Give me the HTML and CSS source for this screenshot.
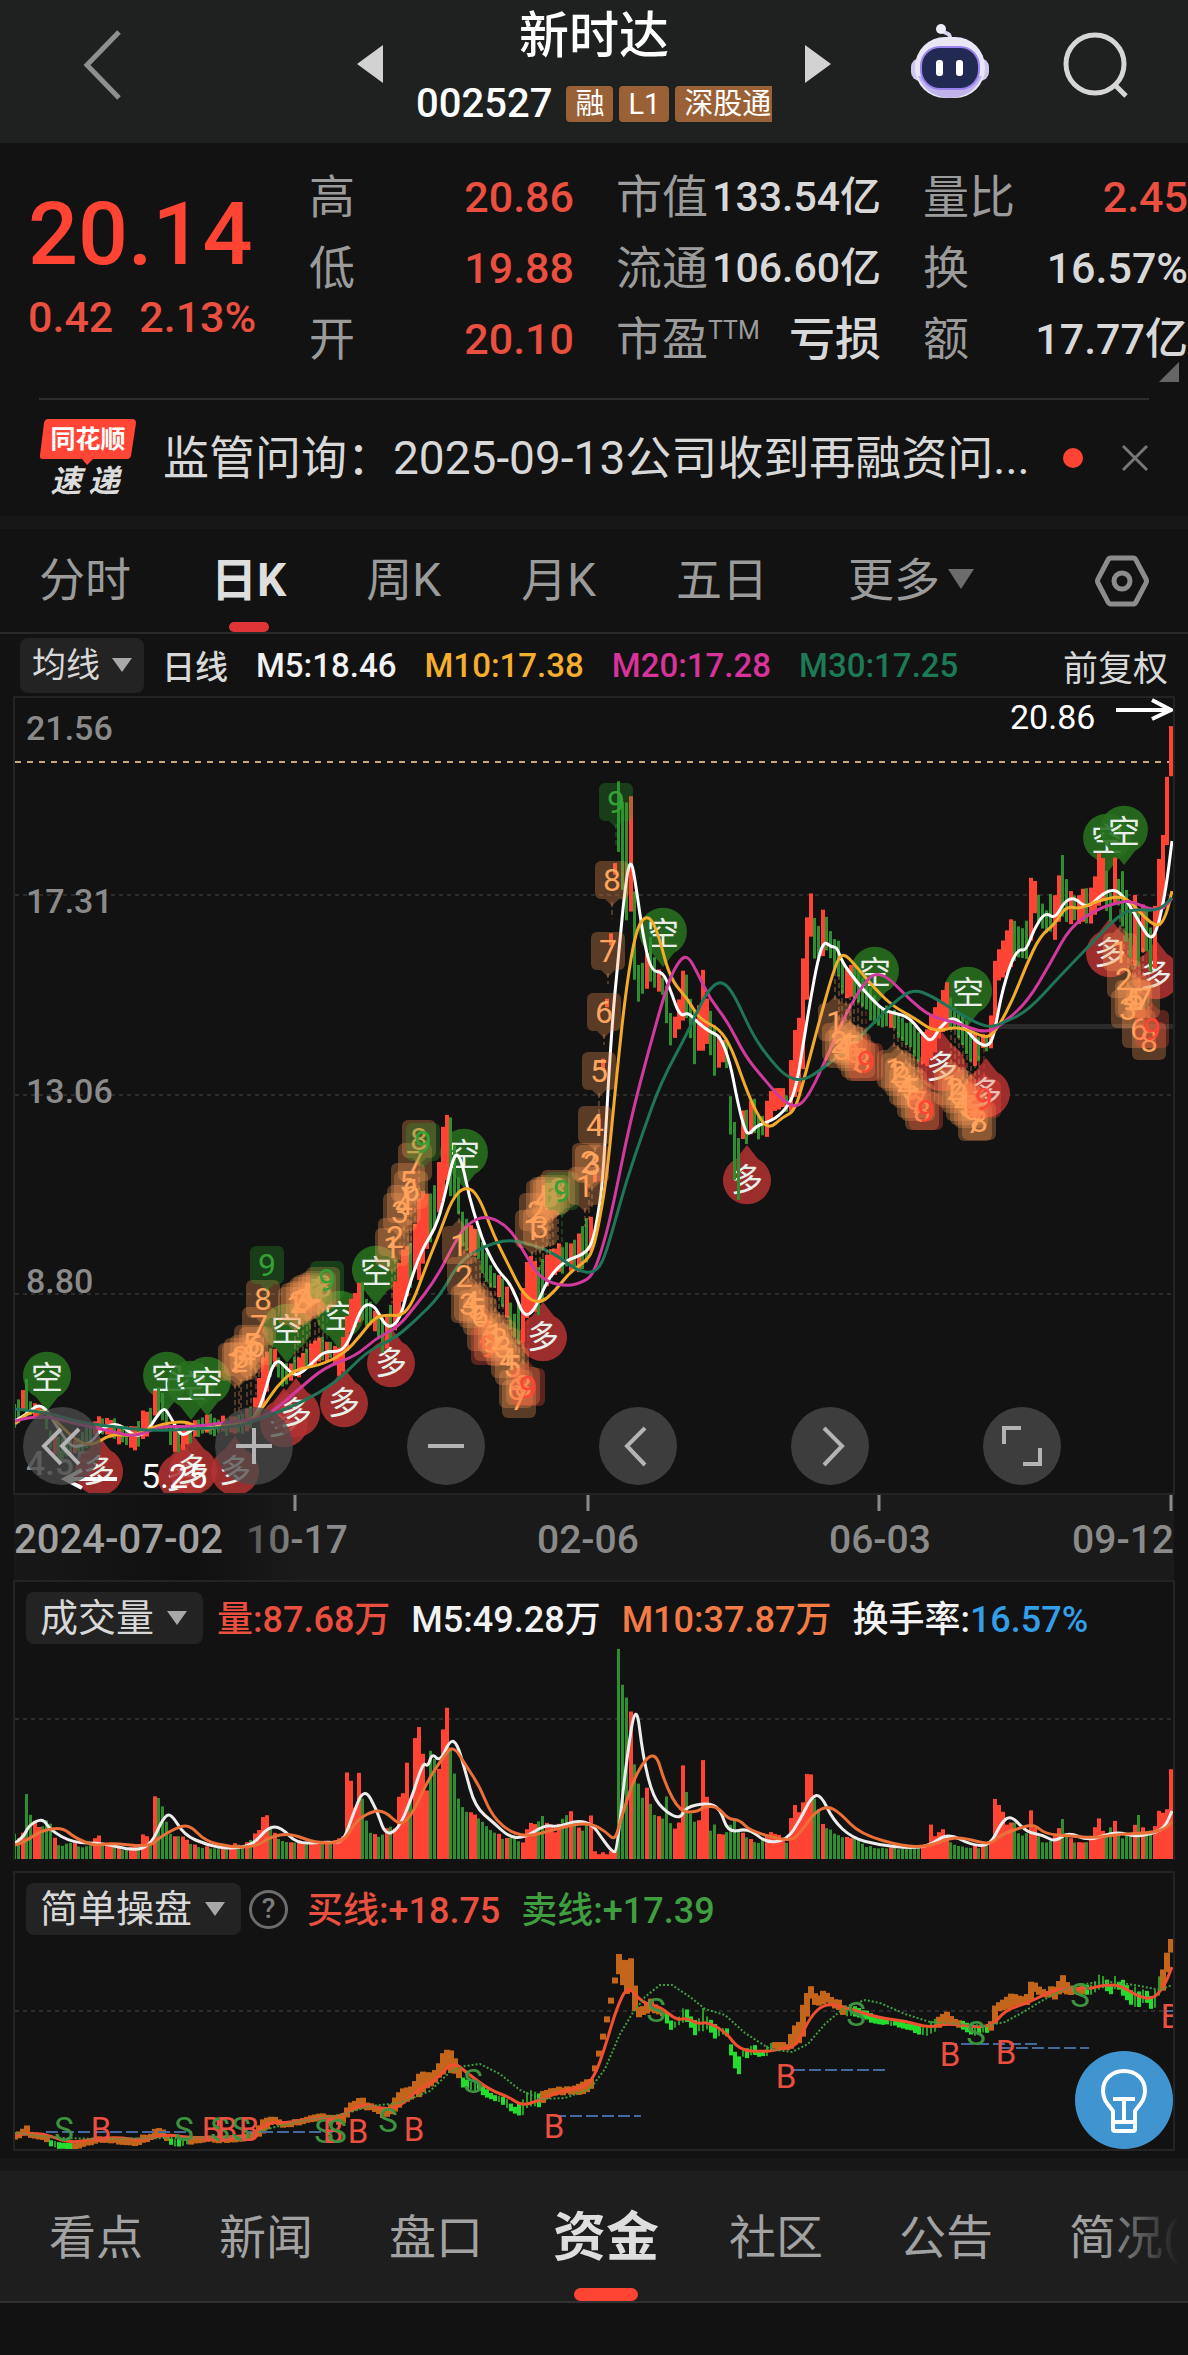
FILE: index.html
```html
<!DOCTYPE html>
<html lang="zh-CN">
<head>
    <meta charset="UTF-8">
    <meta name="viewport" content="width=device-width, initial-scale=1.0">
    <title>新时达 002527</title>
    <link rel="stylesheet" href="styles.css">
</head>
<body>
    <header class="topbar">
        <button class="icon-btn back" aria-label="返回">
            <svg width="40" height="72" viewBox="0 0 40 72"><path d="M36 3 L4 36 L36 69" fill="none" stroke="#8e9090" stroke-width="5"/></svg>
        </button>
        <div class="stock">
            <button class="icon-btn" aria-label="上一只"><svg width="26" height="40" viewBox="0 0 26 40"><path d="M26 1 V39 L0 20 Z" fill="#d2d2d2"/></svg></button>
            <div class="stock-name">
                <h1>新时达</h1>
                <div class="stock-code">
                    <span class="code">002527</span>
                    <span class="tag">融</span>
                    <span class="tag">L1</span>
                    <span class="tag tag-cut">深股通</span>
                </div>
            </div>
            <button class="icon-btn" aria-label="下一只"><svg width="26" height="40" viewBox="0 0 26 40"><path d="M0 1 V39 L26 20 Z" fill="#d2d2d2"/></svg></button>
        </div>
        <div class="tools">
            <button class="icon-btn" aria-label="智能助手">
                <svg width="80" height="76" viewBox="0 0 80 76">
                    <path d="M40 16 C41 8 36 10 32 7" fill="none" stroke="#d9d3f0" stroke-width="4"/>
                    <circle cx="31" cy="5" r="5" fill="#efecfa"/>
                    <rect x="1" y="34" width="78" height="23" rx="9" fill="#cfc8ee"/>
                    <rect x="5" y="13" width="70" height="61" rx="30" fill="#e9e6f8"/>
                    <path d="M8 52 Q16 73 40 74 Q64 73 72 52 Z" fill="#c0b4ea"/>
                    <rect x="10" y="22" width="60" height="44" rx="20" fill="#9a83ee"/>
                    <rect x="12" y="24" width="56" height="40" rx="18" fill="#202a52"/>
                    <rect x="26" y="36" width="7" height="16" rx="3" fill="#fff"/>
                    <rect x="46" y="36" width="7" height="16" rx="3" fill="#fff"/>
                </svg>
            </button>
            <button class="icon-btn" aria-label="搜索">
                <svg width="68" height="68" viewBox="0 0 68 68" fill="none" stroke="#d6d6d6" stroke-width="5"><circle cx="33" cy="33" r="29"/><path d="M53 54 L64 65"/></svg>
            </button>
        </div>
    </header>

    <section class="quote">
        <div class="price">
            <strong>20.14</strong>
            <p><span>0.42</span><span>2.13%</span></p>
        </div>
        <dl>
            <div><dt>高</dt><dd class="up">20.86</dd></div>
            <div><dt>低</dt><dd class="up">19.88</dd></div>
            <div><dt>开</dt><dd class="up">20.10</dd></div>
        </dl>
        <dl class="value">
            <div><dt>市值</dt><dd>133.54亿</dd></div>
            <div><dt>流通</dt><dd>106.60亿</dd></div>
            <div><dt>市盈<sup>TTM</sup></dt><dd class="loss">亏损</dd></div>
        </dl>
        <dl>
            <div><dt>量比</dt><dd class="up">2.45</dd></div>
            <div><dt>换</dt><dd>16.57%</dd></div>
            <div><dt>额</dt><dd>17.77亿</dd></div>
        </dl>
        <span class="corner"></span>
    </section>

    <section class="news">
        <svg class="news-logo" width="98" height="78" viewBox="0 0 98 78">
            <path d="M9 0 H93 Q97 0 97 4 L92 37 Q91 40 88 40 H54 L48 46 L43 40 H4 Q0 40 1 36 L5 4 Q6 0 9 0 Z" fill="#ff4636"/>
            <text x="49" y="29" class="logo-a">同花顺</text>
            <text x="46" y="73" class="logo-b">速 递</text>
        </svg>
        <a href="#" class="news-text">监管问询：2025-09-13公司收到再融资问...</a>
        <span class="dot"></span>
        <button class="icon-btn" aria-label="关闭"><svg width="28" height="28" viewBox="0 0 28 28"><path d="M2 2 L26 26 M26 2 L2 26" stroke="#777" stroke-width="3"/></svg></button>
    </section>

    <nav class="periods">
        <a href="#">分时</a>
        <a href="#" class="active">日K</a>
        <a href="#">周K</a>
        <a href="#">月K</a>
        <a href="#">五日</a>
        <button class="more">更多<i></i></button>
        <button class="icon-btn settings" aria-label="设置">
            <svg width="54" height="52" viewBox="0 0 54 52" fill="none" stroke="#8c8c8c" stroke-width="5"><path d="M16 3 H38 Q40 3 41 5 L51 24 Q52 26 51 28 L41 47 Q40 49 38 49 H16 Q14 49 13 47 L3 28 Q2 26 3 24 L13 5 Q14 3 16 3 Z"/><circle cx="27" cy="26" r="8"/></svg>
        </button>
    </nav>

    <div class="ma-bar">
        <label class="chip small"><select aria-label="主图指标"><option>均线</option></select></label>
        <span class="kind">日线</span>
        <span class="m5">M5:18.46</span>
        <span class="m10">M10:17.38</span>
        <span class="m20">M20:17.28</span>
        <span class="m30">M30:17.25</span>
        <span class="adjust">前复权</span>
    </div>

    <section class="panel main-chart">
        <svg id="kline" viewBox="15 2 1158 795"></svg>
        <div class="controls">
            <button aria-label="最早"><svg viewBox="0 0 78 78"><path d="M38 22 L21 39 L38 57 M56 22 L39 39 L56 57"/></svg></button>
            <button aria-label="放大"><svg viewBox="0 0 78 78"><path d="M21 39 H57 M39 21 V57"/></svg></button>
            <button aria-label="缩小"><svg viewBox="0 0 78 78"><path d="M21 39 H57"/></svg></button>
            <button aria-label="左移"><svg viewBox="0 0 78 78"><path d="M46 21 L28 39 L46 58"/></svg></button>
            <button aria-label="右移"><svg viewBox="0 0 78 78"><path d="M33 21 L51 39 L33 58"/></svg></button>
            <button aria-label="全屏"><svg viewBox="0 0 78 78"><path d="M21 37 V21 H38 M57 41 V57 H40"/></svg></button>
        </div>
    </section>

    <svg class="axis" viewBox="14 0 1160 85">
        <defs>
            <linearGradient id="fade"><stop offset="0" stop-color="#101010" stop-opacity="0.2"/><stop offset="0.6" stop-color="#101010"/><stop offset="1" stop-color="#101010" stop-opacity="0"/></linearGradient>
        </defs>
        <text x="297" y="58" text-anchor="middle">10-17</text>
        <rect x="14" y="0" width="285" height="85" fill="url(#fade)"/>
        <path d="M295 0 V16 M588 0 V16 M879 0 V16 M1171 0 V16" stroke="#8a8a8a" stroke-width="3"/>
        <text x="14" y="58" class="start">2024-07-02</text>
        <text x="588" y="58" text-anchor="middle">02-06</text>
        <text x="880" y="58" text-anchor="middle">06-03</text>
        <text x="1174" y="58" text-anchor="end">09-12</text>
    </svg>

    <section class="panel volume">
        <div class="panel-head">
            <label class="chip"><select aria-label="副图指标一"><option>成交量</option></select></label>
            <span class="up">量:87.68万</span>
            <span class="m5">M5:49.28万</span>
            <span class="vol10">M10:37.87万</span>
            <span class="m5">换手率:<b>16.57%</b></span>
        </div>
        <svg id="volume" viewBox="15 1 1158 212"></svg>
    </section>

    <section class="panel trade">
        <div class="panel-head">
            <label class="chip"><select aria-label="副图指标二"><option>简单操盘</option></select></label>
            <button class="help" aria-label="说明">?</button>
            <span class="up">买线:+18.75</span>
            <span class="down">卖线:+17.39</span>
        </div>
        <svg id="trade" viewBox="15 0 1158 210"></svg>
        <button class="bulb" aria-label="提示">
            <svg width="98" height="98" viewBox="0 0 98 98" fill="none" stroke="#fff" stroke-width="4" stroke-linejoin="round">
                <path d="M38 78 V60 C34 54 28 50 28 40 C28 28 37 20 49 20 C61 20 70 28 70 40 C70 50 64 54 60 60 V78 Q60 80 58 80 H40 Q38 80 38 78 Z M38 71 H60 M49 48 V70 M38 48 H60"/>
            </svg>
        </button>
    </section>

    <nav class="bottom-tabs">
        <a href="#">看点</a>
        <a href="#">新闻</a>
        <a href="#">盘口</a>
        <a href="#" class="active">资金</a>
        <a href="#">社区</a>
        <a href="#">公告</a>
        <a href="#">简况(F10)</a>
    </nav>
    <script src="script.js"></script>
</body>
</html>
```
FILE: styles.css
```css
* {
    box-sizing: border-box;
}

body {
    margin: 0;
    background-color: #121212;
    color: #d8d8d8;
    font-family: Roboto, "Noto Sans CJK SC", sans-serif;
    overflow-x: hidden;
}

a {
    color: inherit;
    text-decoration: none;
}

button,
select {
    font: inherit;
    color: inherit;
    background: none;
    border: none;
    padding: 0;
    margin: 0;
}

svg {
    display: block;
}

.icon-btn {
    flex: none;
}

.up {
    color: #ea4f3f;
}

.down {
    color: #3f9f40;
}

/* top bar */
.topbar {
    display: grid;
    grid-template-columns: 1fr auto 1fr;
    align-items: start;
    height: 143px;
    padding: 0 58px;
    background-color: #1e2120;
}

.back {
    justify-self: start;
    margin: 29px 0 0 25px;
}

.stock {
    display: flex;
    gap: 33px;
}

.stock .icon-btn {
    align-self: start;
    margin-top: 44px;
}

.stock-name {
    width: 356px;
    color: #fff;
    text-align: center;
}

.stock-name h1 {
    margin: 6px 0 0;
    font-size: 50px;
    line-height: 60px;
    font-weight: 500;
}

.stock-code {
    display: flex;
    gap: 6px;
    margin-top: 20px;
    height: 36px;
    line-height: 36px;
}

.code {
    margin-right: 8px;
    font-size: 40px;
    font-weight: 500;
}

.tag {
    padding: 0 9px;
    border-radius: 4px;
    background-color: #9b6136;
    font-size: 29px;
}

.tag-cut {
    flex: 1;
    padding: 0 0 0 9px;
    border-radius: 4px 0 0 4px;
    text-align: left;
    white-space: nowrap;
    overflow: hidden;
}

.tools {
    display: flex;
    gap: 72px;
    justify-self: end;
    margin-top: 24px;
}

.tools .icon-btn:last-child {
    margin-top: 6px;
}

/* quote */
.quote {
    position: relative;
    display: grid;
    grid-template-columns: 239px 1fr 1fr 1fr;
    gap: 42px;
    height: 255px;
    padding: 19px 0 0 28px;
}

.price {
    color: #ff4433;
}

.price strong {
    display: block;
    margin-top: 24px;
    font-size: 88px;
    line-height: 96px;
    font-weight: 500;
}

.price p {
    display: flex;
    gap: 26px;
    margin: 8px 0 0;
    font-size: 43px;
    line-height: 54px;
    font-weight: 500;
    color: #ea4f3f;
}

.quote dl {
    margin: 0;
}

.quote dl div {
    display: flex;
    justify-content: space-between;
    height: 71px;
    line-height: 71px;
    white-space: nowrap;
}

.quote dt {
    color: #9b9b9b;
    font-size: 46px;
}

.quote dt sup {
    font-size: 25px;
    line-height: 1px;
    vertical-align: 16px;
}

.quote dd {
    margin: 0;
    font-size: 43px;
    font-weight: 500;
}

.quote .value dd {
    font-size: 41px;
}

.quote .value .loss {
    font-size: 46px;
}

.corner {
    position: absolute;
    right: 9px;
    bottom: 16px;
    border-left: 20px solid transparent;
    border-bottom: 20px solid #666;
}

/* news */
.news {
    display: flex;
    align-items: center;
    height: 118px;
    margin: 0 39px;
    border-top: 2px solid #2e2e2e;
}

.news-logo {
    flex: none;
}

.logo-a,
.logo-b {
    font-family: "Noto Sans CJK SC", sans-serif;
    font-weight: 700;
    text-anchor: middle;
}

.logo-a {
    font-size: 25px;
    fill: #fff;
}

.logo-b {
    font-size: 31px;
    font-style: italic;
    fill: #dcdcdc;
}

.news-text {
    flex: 1;
    margin-left: 26px;
    font-size: 46px;
    line-height: 60px;
    white-space: nowrap;
    overflow: hidden;
}

.dot {
    flex: none;
    width: 20px;
    height: 20px;
    margin-right: 38px;
    border-radius: 50%;
    background-color: #ff4433;
}

/* period tabs */
.periods {
    display: flex;
    align-items: center;
    gap: 80px;
    height: 118px;
    padding: 0 39px;
    border-top: 13px solid #171717;
    border-bottom: 2px solid #2a2a2a;
    color: #9b9b9b;
    font-size: 46px;
    line-height: 103px;
    white-space: nowrap;
}

.periods .active,
.bottom-tabs .active {
    position: relative;
    color: #dedede;
    font-weight: 700;
}

.periods .active::after {
    content: "";
    position: absolute;
    left: calc(50% - 20px);
    bottom: 0;
    width: 40px;
    height: 10px;
    border-radius: 5px;
    background-color: #e03436;
}

.more i {
    display: inline-block;
    margin-left: 8px;
    vertical-align: 7px;
    border: 13px solid transparent;
    border-top: 20px solid #6c6c6c;
    border-bottom: 0;
}

.settings {
    margin-left: auto;
}

/* chips and indicator values */
.chip {
    display: flex;
    align-items: center;
    gap: 12px;
    height: 52px;
    padding: 0 16px 0 14px;
    border-radius: 8px;
    background-color: #232323;
    font-size: 38px;
    font-weight: 400;
}

.chip.small {
    height: 55px;
    padding: 0 12px;
    font-size: 34px;
}

.chip select {
    appearance: none;
    height: 50px;
}

.chip::after {
    content: "";
    border: 10px solid transparent;
    border-top: 14px solid #a8a8a8;
    border-bottom: 0;
}

.ma-bar {
    display: flex;
    align-items: center;
    height: 62px;
    padding: 0 20px;
    font-size: 33px;
    font-weight: 500;
    white-space: nowrap;
}

.ma-bar span {
    margin-right: 28px;
}

.ma-bar .kind {
    margin-left: 18px;
}

.m5 { color: #f2f2f2; }
.m10 { color: #f5ae2e; }
.m20 { color: #d7339a; }
.m30 { color: #1d7a56; }
.vol10 { color: #f47b45; }

.ma-bar .adjust {
    margin: 0 0 0 auto;
    font-size: 35px;
    font-weight: 400;
}

/* chart panels */
.panel {
    position: relative;
    margin: 0 13px;
    border: 2px solid #232323;
    overflow: hidden;
}

.panel > svg {
    width: 100%;
    height: auto;
}

.panel-head {
    display: flex;
    align-items: center;
    gap: 21px;
    height: 66px;
    padding: 6px 0 0 11px;
    font-size: 36px;
    font-weight: 500;
    white-space: nowrap;
}

.panel-head .chip {
    margin-right: -7px;
}

.panel-head span {
    margin-top: -4px;
}

.panel-head b {
    color: #329fe8;
    font-weight: 500;
}

.volume {
    border-bottom: 0;
    margin-bottom: 11px;
}

.controls {
    position: absolute;
    left: 8px;
    right: 112px;
    bottom: 8px;
    display: flex;
    justify-content: space-between;
}

.controls button {
    width: 78px;
    height: 78px;
    border-radius: 50%;
    background-color: rgba(76, 76, 76, 0.75);
}

.controls path {
    fill: none;
    stroke: #b4b4b4;
    stroke-width: 4;
}

.axis {
    width: calc(100% - 28px);
    height: auto;
    margin: 0 14px;
    background-color: #1a1a1a;
}

.axis text {
    font-size: 39px;
    font-weight: 500;
    fill: #8a8a8a;
}

.axis .start {
    font-size: 40px;
    fill: #a2a2a2;
}

.help {
    width: 39px;
    height: 39px;
    margin: 0 -2px 0 -6px;
    border: 3px solid #6c6c6c;
    border-radius: 50%;
    color: #7c7c7c;
    font-size: 28px;
    line-height: 32px;
}

.bulb {
    position: absolute;
    right: 0;
    bottom: 0;
    border-radius: 50%;
    background-color: #4095d0;
}

/* svg parts */
.grid { stroke: #2c2c2c; stroke-width: 2; stroke-dasharray: 4 4; }
.last { stroke: #c9a97b; stroke-width: 2; stroke-dasharray: 6 6; }
.line { fill: none; stroke-width: 3; stroke-linejoin: round; }
.label { font-size: 34px; font-weight: 500; fill: #8a8a8a; }
.extreme { font-size: 34px; fill: #fff; }
.arrow { fill: none; stroke: #fff; stroke-width: 4; }
.pin { font-size: 32px; fill: #e8efe8; text-anchor: middle; font-family: "Noto Sans CJK SC", sans-serif; }
.count { font-size: 32px; text-anchor: middle; }
.signal { font-size: 33px; text-anchor: middle; }

/* bottom tabs */
.bottom-tabs {
    position: relative;
    display: flex;
    gap: 76px;
    height: 145px;
    margin-top: 7px;
    padding-left: 49px;
    border-top: 13px solid #171717;
    border-bottom: 2px solid #303030;
    background-color: #1e1e1e;
    color: #a2a2a2;
    font-size: 47px;
    line-height: 134px;
    white-space: nowrap;
    overflow: hidden;
}

.bottom-tabs .active {
    height: 130px;
    margin: 0 -6px;
    font-size: 53px;
}

.bottom-tabs .active::after {
    content: "";
    position: absolute;
    left: calc(50% - 32px);
    bottom: 0;
    width: 64px;
    height: 13px;
    border-radius: 7px;
    background-color: #ff4433;
}

.bottom-tabs::after {
    content: "";
    position: absolute;
    top: 0;
    right: 0;
    width: 90px;
    height: 130px;
    background: linear-gradient(to right, rgba(30, 30, 30, 0), #1e1e1e 90%);
}
```
FILE: script.js
```js
const RED = '#ff4433';
const GREEN = '#2f8f30';
const STEP = 4;

// x, high, low
const candles = [
    [15,712,728],[20,705,722],[23,700,712],[27,684,712],[31,708,718],[45,715,722],[52,740,755],[60,745,760],[80,745,755],
    [98,722,735],[110,726,738],[130,735,748],[137,735,750],[143,720,738],[150,718,733],[155,695,718],[163,697,720],[170,735,745],
    [178,735,753],[190,730,742],[205,722,735],[225,725,735],[245,722,733],[255,705,722],[262,665,715],[270,655,680],[275,655,668],
    [282,672,688],[290,670,682],[305,658,672],[320,645,660],[333,650,660],[339,655,678],[343,645,672],[350,605,635],[355,600,630],
    [361,585,620],[368,608,625],[375,615,630],[383,625,655],[390,620,645],[398,570,620],[405,550,600],[410,555,595],[415,530,570],
    [420,500,585],[425,500,550],[430,505,545],[438,480,520],[443,435,500],[447,423,480],[452,424,500],[457,470,500],[463,520,545],
    [470,530,555],[478,535,560],[486,560,580],[495,580,590],[505,590,610],[515,620,640],[522,600,650],[527,570,620],[532,560,610],
    [540,575,620],[545,560,590],[555,555,575],[567,550,570],[578,545,575],[588,525,560],[591,523,550],[595,476,484],[599,424,430],
    [603,364,372],[607,304,310],[611,240,248],[615,170,176],[619,91,153],[623,110,188],[627,110,220],[631,102,212],[635,200,282],[639,271,301],
    [645,271,293],[651,246,280],[656,267,288],[660,280,296],[665,285,295],[668,300,341],[672,325,345],[677,320,337],[683,278,322],
    [688,285,318],[693,320,350],[695,320,365],[699,310,350],[703,279,354],[708,310,340],[714,330,376],[722,345,365],[727,350,370],
    [731,404,433],[735,430,480],[739,445,500],[743,417,440],[748,420,447],[752,405,428],[756,410,435],[762,430,440],[768,400,435],
    [775,395,412],[782,390,410],[787,405,415],[791,365,410],[795,340,400],[799,325,390],[803,266,370],[807,222,300],[811,200,240],
    [815,222,260],[819,235,265],[823,218,255],[827,221,250],[832,245,265],[838,245,275],[845,275,300],[855,270,300],[865,285,310],
    [875,300,325],[880,315,330],[890,315,325],[905,325,345],[915,335,355],[925,340,370],[932,320,360],[939,305,340],[947,290,330],
    [955,315,330],[962,320,345],[972,335,365],[976,345,370],[982,340,350],[990,340,355],[994,268,340],[998,257,285],[1003,246,280],
    [1011,225,270],[1020,235,255],[1026,240,262],[1031,187,240],[1035,190,212],[1040,205,225],[1047,215,235],[1052,200,235],
    [1056,200,240],[1060,180,220],[1063,162,215],[1068,195,225],[1075,205,220],[1083,195,225],[1090,198,225],[1095,185,215],
    [1099,162,205],[1103,167,200],[1107,180,210],[1111,200,220],[1115,162,205],[1120,195,210],[1124,170,230],[1130,220,260],
    [1135,200,265],[1140,225,270],[1145,200,240],[1150,240,275],[1155,210,270],[1159,166,230],[1163,145,210],[1167,83,143],[1171,33,78]
];

// x, bar height
const volumes = [
    [15,24],[19,20],[23,25],[27,65],[31,42],[36,35],[40,28],[46,36],[50,40],[54,20],[60,12],[68,15],[75,14],[85,10],[99,22],
    [103,15],[110,12],[125,8],[140,12],[143,22],[151,18],[155,60],[159,60],[163,51],[167,35],[172,20],[180,22],[190,15],[200,10],
    [215,10],[225,9],[235,14],[245,12],[253,20],[259,28],[263,39],[267,43],[271,30],[280,18],[290,15],[300,16],[310,14],[320,14],
    [335,16],[343,20],[347,86],[351,77],[355,50],[359,85],[363,60],[367,38],[371,25],[378,20],[385,25],[390,32],[395,30],[399,60],
    [403,64],[407,94],[411,60],[415,119],[419,130],[423,103],[427,66],[431,108],[435,100],[439,88],[443,127],[447,149],[451,110],
    [455,84],[459,60],[463,50],[470,45],[478,40],[487,32],[495,25],[505,18],[515,20],[523,15],[529,34],[535,32],[543,43],[547,35],
    [555,25],[563,40],[571,45],[577,30],[583,28],[591,42],[595,5],[599,4],[607,4],[615,6],[619,210],[623,174],[627,161],[631,145],
    [635,94],[639,73],[643,60],[647,69],[651,55],[655,42],[659,40],[663,40],[667,60],[671,33],[675,28],[679,35],[683,91],[687,66],
    [691,44],[695,35],[699,38],[703,98],[707,60],[711,28],[715,33],[720,20],[727,25],[735,40],[740,26],[750,18],[760,15],[770,25],
    [780,22],[787,15],[791,38],[795,52],[799,45],[803,55],[807,84],[811,82],[815,58],[819,48],[823,34],[830,28],[840,22],[850,18],
    [856,22],[865,12],[880,10],[895,10],[910,9],[927,12],[931,32],[935,22],[943,28],[950,15],[960,12],[975,10],[985,12],[991,15],
    [995,59],[999,54],[1003,45],[1008,30],[1014,38],[1020,22],[1027,25],[1031,48],[1036,25],[1045,14],[1055,20],[1063,40],
    [1068,20],[1080,14],[1090,16],[1099,40],[1105,18],[1115,36],[1120,20],[1130,22],[1139,42],[1145,22],[1155,30],[1159,48],
    [1163,45],[1167,48],[1171,87]
];

const ma5 = '15,725 27,718 38,708 48,715 57,731 71,751 80,750 92,746 101,733 115,727 126,733 136,741 147,736 155,723 164,711 170,720 178,735 184,740 195,731 210,733 226,728 245,728 256,720 264,700 272,670 279,664 285,671 295,680 304,675 314,665 325,655 341,656 350,643 358,620 365,608 375,610 383,626 390,632 400,623 408,593 421,555 436,531 444,503 452,466 457,456 463,470 469,500 478,530 486,553 498,575 509,586 517,603 522,616 528,620 536,611 547,585 559,570 570,563 584,558 592,548 597,525 603,485 611,340 619,253 626,183 631,162 636,190 643,240 651,275 663,276 670,293 680,321 688,316 697,326 710,336 720,340 730,366 737,403 743,428 748,440 756,430 768,426 779,420 791,406 797,386 802,356 810,306 818,263 824,245 831,251 837,251 842,266 856,285 869,300 883,314 894,317 909,321 921,336 931,347 940,331 953,320 965,331 976,346 988,351 994,340 1001,300 1011,266 1019,253 1026,255 1034,233 1045,216 1055,223 1064,206 1074,201 1087,213 1103,197 1116,193 1128,206 1139,226 1151,245 1158,231 1166,193 1172,145';
const ma10 = '15,728 29,715 46,715 61,730 77,745 92,750 111,738 134,740 153,731 172,726 189,726 203,735 226,728 249,726 262,713 276,691 295,673 318,670 344,658 360,640 375,621 387,619 402,620 413,606 425,573 440,536 452,503 465,490 478,498 494,540 509,570 524,600 540,608 555,595 570,576 586,565 592,556 598,533 607,480 617,376 626,293 636,233 647,218 657,233 670,283 688,303 699,323 720,333 732,353 745,390 756,416 768,434 783,421 795,415 806,376 818,330 833,276 842,255 856,270 875,293 894,311 913,321 934,336 955,331 971,335 988,343 999,330 1013,303 1026,270 1040,240 1055,228 1066,210 1080,213 1097,205 1120,200 1131,206 1143,220 1158,232 1166,220 1172,195';
const ma20 = '15,725 38,718 77,728 115,736 134,741 161,730 191,731 230,726 260,723 276,713 299,693 325,671 356,660 375,643 398,631 413,613 436,583 455,546 467,528 486,519 509,531 524,556 540,583 566,591 586,585 594,576 603,550 612,515 630,426 649,353 668,286 680,263 688,260 697,276 710,303 728,326 745,360 764,383 783,405 797,412 810,398 829,356 848,313 867,283 877,277 890,283 909,303 931,321 955,326 986,338 1005,326 1028,305 1051,266 1070,231 1097,213 1120,206 1131,205 1154,215 1166,210 1172,202';
const ma30 = '15,713 46,716 77,726 115,731 153,735 191,733 237,731 260,723 299,708 337,686 367,655 394,643 417,623 440,600 459,566 482,551 509,543 536,550 555,558 578,575 593,577 602,568 611,540 626,486 643,436 661,386 688,336 703,303 714,288 724,286 735,300 753,340 772,366 787,381 802,385 818,376 841,358 871,330 894,306 913,293 932,300 955,315 986,332 1001,328 1028,315 1059,281 1089,250 1120,218 1135,213 1158,215 1172,202';

const vol5 = '15,196 23,191 29,178 43,171 50,183 73,196 103,196 134,204 151,198 163,171 171,166 184,188 207,198 230,202 253,198 268,180 281,180 297,197 325,195 343,196 352,170 364,140 377,163 385,188 398,183 411,153 423,115 428,120 432,106 440,115 450,93 457,96 465,123 475,160 494,176 509,190 524,191 545,178 559,180 578,173 593,178 601,190 613,206 617,203 626,116 636,52 643,110 653,150 666,165 680,172 686,160 707,156 720,161 728,186 749,181 766,196 787,193 800,173 812,149 821,148 833,173 852,191 879,198 909,201 929,199 948,186 971,198 990,199 1001,176 1011,168 1026,185 1043,188 1055,195 1068,185 1089,194 1116,184 1135,190 1158,185 1166,178 1172,164';
const vol10 = '15,198 25,195 40,184 62,180 75,191 95,199 110,196 150,200 160,190 180,179 191,179 205,194 230,200 255,200 270,190 290,186 315,196 343,196 355,175 370,165 384,163 400,179 412,168 428,133 442,112 453,98 465,117 480,140 490,165 505,182 525,190 550,184 575,177 592,177 605,184 615,194 620,175 636,125 655,102 665,137 680,165 697,165 705,159 718,160 728,172 740,173 750,184 790,195 800,186 815,165 828,159 840,166 860,187 905,200 930,199 950,191 965,191 990,198 1000,188 1020,181 1034,177 1045,187 1070,189 1095,191 1120,187 1150,186 1165,182 1172,175';

const buyLine = '15,196 38,194 50,197 71,204 92,200 119,198 142,202 165,195 191,199 230,198 253,196 268,183 287,184 314,179 341,178 362,164 387,171 402,166 417,151 436,141 453,122 467,134 490,151 509,158 522,167 540,161 563,151 586,148 596,134 605,108 617,68 628,46 642,64 661,68 676,81 688,79 697,85 707,83 726,93 739,111 764,113 787,109 797,106 810,78 825,64 848,69 879,79 906,82 929,89 948,84 990,90 1005,71 1028,64 1047,54 1063,49 1089,50 1103,46 1120,46 1135,56 1152,61 1164,48 1172,28';
const sellLine = '15,194 60,199 100,200 240,198 275,188 300,182 340,176 370,167 400,164 430,152 450,133 465,127 480,125 500,135 520,151 540,160 565,159 590,150 605,130 620,95 632,75 645,58 660,46 672,46 690,58 705,70 725,76 745,94 770,110 792,113 808,105 825,85 845,68 865,61 880,64 905,75 930,83 985,87 1005,83 1025,72 1045,60 1065,50 1090,44 1115,43 1140,47 1160,51 1172,46';

// runs of nine: direction, then x,y for 1..9
const runs = [
    ['up', '235,666 239,665 241,661 247,658 251,648 256,650 259,630 263,603 267,569'],
    ['up', '295,610 298,606 303,604 307,600 310,598 315,596 319,594 323,590 327,584'],
    ['up', '392,551 395,541 400,516 404,508 408,486 411,494 415,466 419,443 423,446'],
    ['down', '459,549 464,580 468,608 471,606 476,613 480,620 484,636 491,646 488,650'],
    ['down', '495,638 499,643 503,651 508,663 512,670 516,693 519,703 523,690 528,691'],
    ['up', '532,533 536,516 540,531 543,503 547,500 550,500 553,498 558,493 562,495'],
    ['up', '585,490 589,466 592,468 595,429 599,375 604,316 608,255 612,184 616,106'],
    ['down', '835,326 839,346 842,353 846,348 850,350 854,356 858,363 862,366 866,366'],
    ['down', '894,373 898,376 902,381 906,390 910,393 914,403 918,406 922,415 926,415'],
    ['down', '951,390 955,393 959,398 963,406 967,410 971,413 975,426 979,425 984,403'],
    ['down', '1120,256 1124,283 1128,313 1132,303 1135,303 1139,333 1143,303 1149,345 1152,333']
];

const shortPins = '47,681 167,681 191,690 207,686 287,633 340,620 376,575 464,458 663,237 875,276 968,296 1107,143 1124,135';
const longPins = '99,774 182,780 193,773 235,774 284,726 296,716 344,706 391,666 543,640 747,483 942,370 986,396 1110,256 1156,278';

const signals = [
    ['S',64,190],['B',101,190],['S',184,190],['B',212,190],['S',220,190],['B',227,190],['S',241,190],['B',249,190],['S',324,192],
    ['B',333,192],['S',337,192],['B',358,192],['S',388,181],['B',414,190],['S',473,142],['B',554,187],['S',656,71],['B',786,137],
    ['S',856,75],['B',950,115],['S',976,94],['B',1006,113],['S',1080,56],['B',1171,77]
];

const weak = [[50,72],[170,188],[459,540],[664,775],[843,937],[960,990],[1085,1162]];

function points(str) {
    return str.split(' ').map(p => p.split(',').map(Number));
}

function noise(n) {
    const v = Math.sin(n * 12.9898) * 43758.5453;
    return v - Math.floor(v);
}

// linear value of column k at x
function at(rows, x, k) {
    let i = 1;
    while (i < rows.length - 1 && rows[i][0] < x) i++;
    const a = rows[i - 1], b = rows[i];
    const t = Math.max(0, Math.min(1, (x - a[0]) / (b[0] - a[0])));
    return a[k] + (b[k] - a[k]) * t;
}

function curve(str, color) {
    const p = points(str);
    let d = `M${p[0]}`;
    for (let i = 1; i < p.length - 1; i++) {
        d += ` Q${p[i]} ${(p[i][0] + p[i + 1][0]) / 2},${(p[i][1] + p[i + 1][1]) / 2}`;
    }
    d += ` L${p[p.length - 1]}`;
    return `<path class="line" stroke="${color}" d="${d}"/>`;
}

function bars() {
    const list = [];
    for (let x = 15; x <= 1171; x += STEP) {
        const hi = at(candles, x, 1), lo = at(candles, x, 2);
        const before = at(candles, x - STEP, 1) + at(candles, x - STEP, 2);
        const rise = before - hi - lo;
        const opening = x > 616 && x < 626;
        const up = x > 1154 || (!opening && rise / 10 + noise(x) * 7 - 3.7 > 0);
        const extra = noise(x + 7) * 6;
        list.push({ x, hi: hi - extra, lo: lo + noise(x + 3) * 6, up });
    }
    return list;
}

const data = bars();

function drawKline() {
    let s = '';
    [199, 399, 598].forEach(y => s += `<line class="grid" x1="15" x2="1173" y1="${y}" y2="${y}"/>`);
    s += '<rect x="999" y="328" width="175" height="5" fill="#2a2a2a"/>';
    [['21.56', 44], ['17.31', 217], ['13.06', 407], ['8.80', 597], ['4.55', 779]].forEach(([t, y]) => {
        s += `<text class="label" x="26" y="${y}">${t}</text>`;
    });
    s += '<line class="last" x1="15" x2="1173" y1="66" y2="66"/>';
    points(shortPins).forEach(([x, y]) => {
        s += `<path d="M${x} ${y + 34} L${x - 11} ${y + 20} A24 24 0 1 1 ${x + 11} ${y + 20} Z" fill="#28701f" fill-opacity="0.88"/>`;
        s += `<text class="pin" x="${x}" y="${y + 12}">空</text>`;
    });
    points(longPins).forEach(([x, y]) => {
        s += `<path d="M${x} ${y - 34} L${x - 11} ${y - 20} A24 24 0 1 0 ${x + 11} ${y - 20} Z" fill="#b23232" fill-opacity="0.86"/>`;
        s += `<text class="pin" x="${x}" y="${y + 12}">多</text>`;
    });
    data.forEach(b => {
        const w = b.up ? 4 : 3;
        s += `<rect x="${b.x - 2}" y="${b.hi}" width="${w}" height="${b.lo - b.hi}" fill="${b.up ? RED : GREEN}"/>`;
    });
    s += curve(ma5, '#fff') + curve(ma10, '#f2ab2b') + curve(ma20, '#d13a9d') + curve(ma30, '#1f7557');
    runs.forEach(([dir, str]) => {
        points(str).forEach(([x, y], i) => {
            const last = i === 8;
            const box = last ? (dir === 'up' ? '#2ca32c' : '#ff5038') : '#ff9d55';
            const ink = last ? (dir === 'up' ? '#35a035' : '#ff4433') : '#ffa55f';
            const end = dir === 'up' ? at(candles, x, 1) : at(candles, x, 2);
            const from = dir === 'up' ? y + 22 : y - 22;
            const tail = dir === 'up' ? `M${x - 7} ${y + 19} h14 l-7 7 Z` : `M${x - 7} ${y - 19} h14 l-7 -7 Z`;
            s += `<line x1="${x}" x2="${x}" y1="${from}" y2="${end}" stroke="${ink}" stroke-opacity="0.55" stroke-dasharray="5 3"/>`;
            s += `<g fill="${box}" fill-opacity="0.3"><rect x="${x - 17}" y="${y - 19}" width="34" height="38" rx="6"/><path d="${tail}"/></g>`;
            s += `<text class="count" x="${x}" y="${y + 11}" fill="${ink}">${i + 1}</text>`;
        });
    });
    s += '<text class="extreme" x="1010" y="33">20.86</text><path class="arrow" d="M1116 14 H1170 M1152 4 L1171 14 L1152 23"/>';
    s += '<text class="extreme" x="141" y="792">5.25</text><path class="arrow" d="M117 783 H66 M82 774 L65 783 L82 792"/>';
    document.getElementById('kline').innerHTML = s;
}

function drawVolume() {
    let s = '<line class="grid" x1="15" x2="1173" y1="72" y2="72"/>';
    data.forEach(b => {
        const h = at(volumes, b.x, 1) + noise(b.x) * 3;
        s += `<rect x="${b.x - 2}" y="${212 - h}" width="${b.up ? 4 : 3}" height="${h}" fill="${b.up ? RED : GREEN}"/>`;
    });
    s += curve(vol5, '#ececec') + curve(vol10, '#ea7038');
    document.getElementById('volume').innerHTML = s;
}

function drawTrade() {
    let s = '<line class="grid" x1="15" x2="1173" y1="72" y2="72"/>';
    data.forEach(b => {
        const y = (b.hi - 33) * 0.287;
        const h = Math.max(6, (b.lo - b.hi) * 0.287);
        if (weak.some(([a, z]) => b.x > a && b.x < z)) {
            const w = b.up ? 2 : 4;
            s += `<rect x="${b.x - w / 2}" y="${y}" width="${w}" height="${h}" fill="${b.up ? '#2a9a2a' : '#22dd2c'}"/>`;
        } else {
            s += `<rect x="${b.x - 3}" y="${y}" width="6" height="${h}" fill="#c4651c"/>`;
        }
    });
    s += `<path d="M46 193 H192 M245 193 H333 M554 177 H641 M793 131 H885 M945 105 H1037 M1000 109 H1089 M1166 72 H1174" fill="none" stroke="#43699f" stroke-width="2" stroke-dasharray="12 4"/>`;
    s += curve(buyLine, '#f0502f');
    s += `<polyline points="${sellLine}" fill="none" stroke="#3f9f40" stroke-width="2" stroke-dasharray="2 2"/>`;
    signals.forEach(([t, x, y]) => {
        s += `<text class="signal" x="${x}" y="${y + 12}" fill="${t === 'S' ? '#3c9440' : '#ea4f3f'}">${t}</text>`;
    });
    document.getElementById('trade').innerHTML = s;
}

drawKline();
drawVolume();
drawTrade();
```
